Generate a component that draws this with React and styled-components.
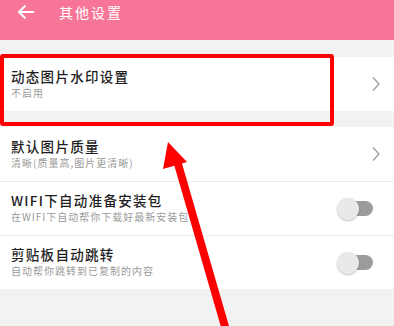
import React from 'react';
import styled, { createGlobalStyle } from 'styled-components';

const Global = createGlobalStyle`
  html, body {
    margin: 0;
    padding: 0;
    background: #f2f2f2;
    font-family: "Noto Sans CJK SC", "Noto Sans", sans-serif;
  }
`;

const Page = styled.div`
  position: relative;
  width: 394px;
  height: 326px;
  overflow: hidden;
  background: #f2f2f2;
`;

const Header = styled.div`
  height: 40px;
  background: #f77597;
  display: flex;
  align-items: flex-start;
  padding: 0 0 0 17px;
  box-sizing: border-box;
  color: #fff;
`;

const Back = styled.div`
  width: 20px;
  height: 24px;
  display: flex;
  align-items: center;
`;

const Title = styled.div`
  margin-left: 22px;
  font-size: 14px;
  line-height: 24px;
  letter-spacing: 2px;
`;

const Section = styled.div`
  background: #fff;
  margin-top: ${(p) => p.gap}px;
`;

const Row = styled.div`
  height: 54px;
  box-sizing: border-box;
  display: flex;
  align-items: center;
  padding: 0 13px 0 11px;
  border-top: ${(p) => (p.divider ? '1px solid #ebebeb' : 'none')};
  background-clip: padding-box;
`;

const Texts = styled.div`
  flex: 1;
  display: flex;
  flex-direction: column;
  padding-bottom: 2px;
`;

const RowTitle = styled.div`
  font-size: 13.5px;
  line-height: 18px;
  letter-spacing: 1.3px;
  color: #1e1e1e;
  font-weight: 500;
`;

const RowSub = styled.div`
  font-size: 10px;
  line-height: 15px;
  letter-spacing: 1px;
  color: #9a9a9a;
`;

const Toggle = styled.div`
  position: relative;
  width: 36px;
  height: 22px;
  margin-right: 8px;
  display: flex;
  align-items: center;
  justify-content: flex-end;
`;

const Track = styled.div`
  width: 30px;
  height: 15px;
  border-radius: 8px;
  background: #9c9c9c;
`;

const Knob = styled.div`
  position: absolute;
  left: 0;
  top: 0;
  width: 22px;
  height: 22px;
  border-radius: 50%;
  background: #e9e9e9;
  box-shadow: 0 1px 2px rgba(0, 0, 0, 0.25);
`;

const Highlight = styled.div`
  position: absolute;
  left: 0;
  top: 54px;
  width: 334px;
  height: 72px;
  box-sizing: border-box;
  border: 4.5px solid #ff0000;
  border-radius: 3px;
  pointer-events: none;
`;

const Arrow = styled.svg`
  position: absolute;
  left: 0;
  top: 0;
  pointer-events: none;
`;

const Chevron = () => (
  <svg width="10" height="16" viewBox="0 0 10 16">
    <path d="M2 1.5 L8 8 L2 14.5" fill="none" stroke="#9e9e9e" strokeWidth="1.3" />
  </svg>
);

const Switch = () => (
  <Toggle>
    <Track />
    <Knob />
  </Toggle>
);

const items = [
  { title: 'WIFI下自动准备安装包', sub: '在WIFI下自动帮你下载好最新安装包' },
  { title: '剪贴板自动跳转', sub: '自动帮你跳转到已复制的内容' },
];

export default function App() {
  return (
    <Page>
      <Global />
      <Header>
        <Back>
          <svg width="18" height="16" viewBox="0 0 18 16">
            <path d="M17 8 H2 M8.5 1.5 L2 8 L8.5 14.5" fill="none" stroke="#fff" strokeWidth="2" />
          </svg>
        </Back>
        <Title>其他设置</Title>
      </Header>

      <Section gap={17}>
        <Row>
          <Texts>
            <RowTitle>动态图片水印设置</RowTitle>
            <RowSub>不启用</RowSub>
          </Texts>
          <Chevron />
        </Row>
      </Section>

      <Section gap={16}>
        <Row>
          <Texts>
            <RowTitle>默认图片质量</RowTitle>
            <RowSub>清晰(质量高,图片更清晰)</RowSub>
          </Texts>
          <Chevron />
        </Row>
        {items.map((it) => (
          <Row divider key={it.title}>
            <Texts>
              <RowTitle>{it.title}</RowTitle>
              <RowSub>{it.sub}</RowSub>
            </Texts>
            <Switch />
          </Row>
        ))}
      </Section>

      <Highlight />
      <Arrow width="394" height="326" viewBox="0 0 394 326">
        <line x1="226" y1="330" x2="178" y2="164" stroke="#ff0000" strokeWidth="8" />
        <polygon points="168,142 163,169 187,162" fill="#ff0000" />
      </Arrow>
    </Page>
  );
}
